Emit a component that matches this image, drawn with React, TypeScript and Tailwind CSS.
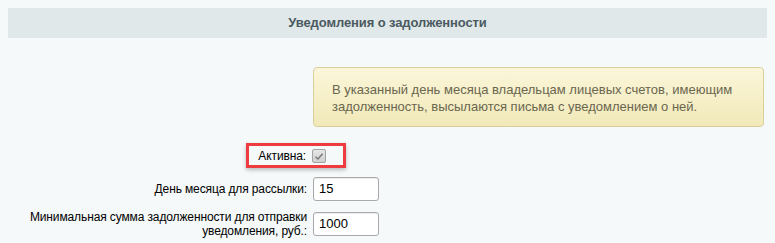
import React from "react";

export default function App() {
  return (
    <div className="relative w-[775px] h-[243px] overflow-hidden bg-[#f5f9f9] pt-2 px-2 font-['Liberation_Sans',Arial,sans-serif] text-[12px] text-black">
      <div className="h-[30px] bg-[#e0e8ea] flex items-center justify-center">
        <span className="whitespace-nowrap text-[13px] font-bold tracking-[-0.1px] text-[#4b5a61]">
          Уведомления о задолженности
        </span>
      </div>

      <div className="flex mt-[29px]">
        <div className="w-[305px] shrink-0" />
        <div className="w-[451px] h-[60px] rounded-[4px] border border-[#d9cf9c] bg-gradient-to-b from-[#fbf6da] to-[#f1e9b8] pl-[18px] pt-[13px] text-[13px] text-[#6a664f] leading-[17px]">
          В указанный день месяца владельцам лицевых счетов, имеющим
          <br />
          задолженность, высылаются письма с уведомлением о ней.
        </div>
      </div>

      <div className="flex items-center h-[26px] mt-[16px]">
        <div className="w-[298px] shrink-0 text-right tracking-[-0.12px]">Активна:</div>
        <div className="ml-[6px] w-[14px] h-[14px] rounded-[2px] border border-[#a3a3a3] bg-gradient-to-b from-[#e6e6e6] to-[#cfcfcf] flex items-center justify-center">
          <svg width="10" height="9" viewBox="0 0 10 9">
            <path d="M1.5 4.8 L4 7 L8.6 1.8" fill="none" stroke="#7a7a7a" strokeWidth="1.5" />
          </svg>
        </div>
      </div>

      <div className="flex items-center h-[24px] mt-[8px]">
        <div className="w-[299px] shrink-0 text-right tracking-[-0.12px]">День месяца для рассылки:</div>
        <div className="ml-[6px] w-[66px] h-[24px] rounded-[3px] border border-[#a9a9a9] bg-white shadow-[inset_0_1px_1px_rgba(0,0,0,0.08)] flex items-center pl-[5px] text-[13px]">
          15
        </div>
      </div>

      <div className="flex items-center h-[30px] mt-[8px]">
        <div className="w-[299px] shrink-0 text-right leading-[14px] tracking-[-0.12px]">
          Минимальная сумма задолженности для отправки
          <br />
          уведомления, руб.:
        </div>
        <div className="ml-[6px] w-[66px] h-[24px] rounded-[3px] border border-[#a9a9a9] bg-white shadow-[inset_0_1px_1px_rgba(0,0,0,0.08)] flex items-center pl-[5px] text-[13px]">
          1000
        </div>
      </div>

      <div className="absolute left-[246px] top-[143px] w-[100px] h-[25px] border-[3px] border-[#ee3b40] shadow-[0_2px_4px_rgba(0,0,0,0.25)]" />
    </div>
  );
}
